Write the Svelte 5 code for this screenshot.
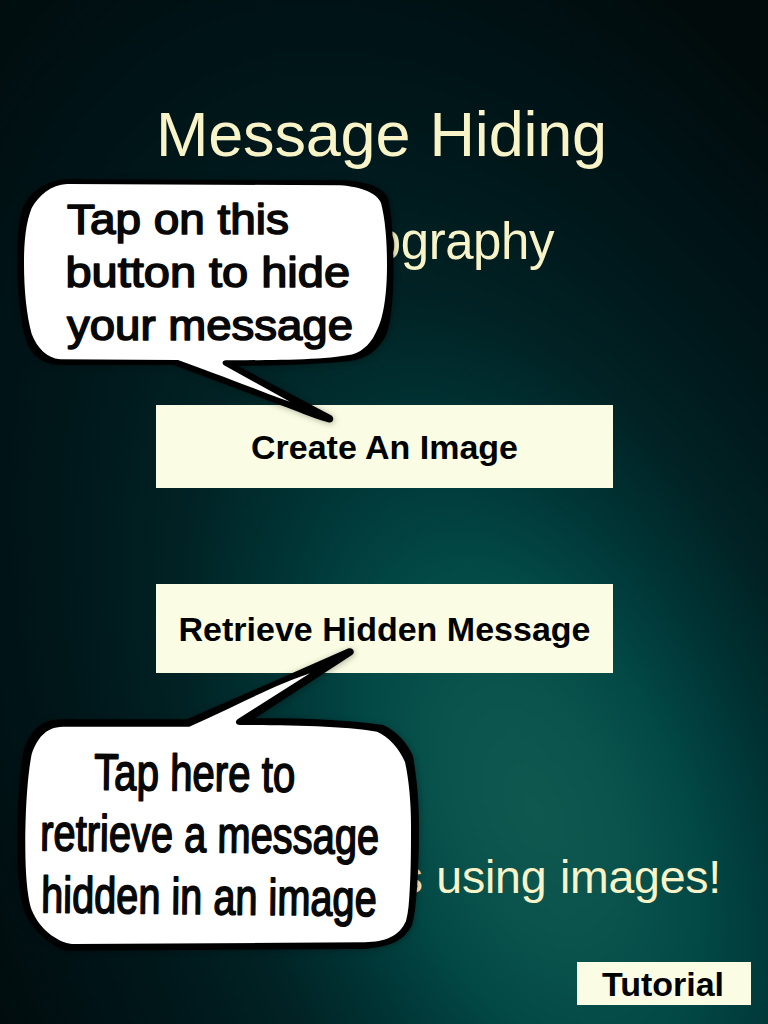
<script>
  const createLines = [
    { text: 'Tap on this', x: 67, y: 233.5, width: 222 },
    { text: 'button to hide', x: 65.5, y: 286.9, width: 284.5 },
    { text: 'your message', x: 67, y: 340.3, width: 286 }
  ];
  const retrieveLines = [
    { text: 'Tap here to', x: 94, y: 789.5, width: 201 },
    { text: 'retrieve a message', x: 40, y: 850.2, width: 339 },
    { text: 'hidden in an image', x: 41, y: 912.2, width: 335.5 }
  ];
</script>

<main class="screen">
  <svg class="backdrop" viewBox="0 0 768 1024" aria-hidden="true">
    <defs>
      <radialGradient id="glow" gradientUnits="userSpaceOnUse" cx="0" cy="0" r="1"
        gradientTransform="translate(534 810) rotate(-23) scale(590 1050)">
        <stop offset="0" stop-color="#0e5850" />
        <stop offset="0.12" stop-color="#0b544d" />
        <stop offset="0.25" stop-color="#024845" />
        <stop offset="0.38" stop-color="#003435" />
        <stop offset="0.52" stop-color="#012224" />
        <stop offset="0.66" stop-color="#00191c" />
        <stop offset="0.8" stop-color="#001316" />
        <stop offset="1" stop-color="#010b0c" />
      </radialGradient>
    </defs>
    <rect width="768" height="1024" fill="url(#glow)" />
  </svg>

  <header>
    <h1>Message Hiding</h1>
    <h2>ography</h2>
  </header>
  <button class="action create">Create An Image</button>
  <button class="action retrieve">Retrieve Hidden Message</button>
  <p>s using images!</p>
  <footer><button class="tutorial">Tutorial</button></footer>

  <svg class="callouts" viewBox="0 0 768 1024">
    <g class="bubble">
      <path d="M68 179.3 L345 180.3 C368 182 382 187 388 198 C392 212 393.7 245 393.5 275 C393 300 391 325 386 335 C378 351 366 359 350 361 C315 364.500 275 365.500 238 366 L331.500 415.500 C335 418.500 333 423.500 328 422.300 C312 418 295 410 280 405 L173 364.700 L58 365 C42 363.500 33 356 28 345 C20 325 17.300 290 17.300 262 C17.300 235 19 215 24 205 C32 190 48 180 68 179.300Z" />
      <path class="paper" d="M67 184 L340 185.300 C362 187 377 193 381 203 C385 218 387 240 387 265 C387 292 384 317 377 330 C372 342 364 351 352 354.500 C325 360 270 360.300 226 360.300 C222 360.500 221.500 363.500 224.500 365.500 L290 401.700 C260 391 220 375 178 360 L60 359.300 C47 358 37 348 31.700 334 C26.500 315 24 290 24 263 C24 240 26 222 31.700 208 C39 195 51 185 67 184Z" />
    </g>
    <g class="words first">
      {#each createLines as line}
        <text x={line.x} y={line.y} textLength={line.width} lengthAdjust="spacingAndGlyphs">{line.text}</text>
      {/each}
    </g>

    <g class="bubble">
      <path d="M61 719.300 L187 719.300 L348 648.500 C353 647 356 652 352 655 L255 718.300 C300 718 345 719.500 383 725 C397 731 408 744 413 756 C417 780 419 802 419 827 C419 850 418.500 870 416.700 892 C415.500 905 415 915 412 925 C404 942 387 947 364 949 L68 950.700 C55 949 34 933 25 913 C18.500 896 17.300 865 17.300 845 C17.300 810 19 775 23.300 752 C28 735 37 719.800 61 719.300Z" />
      <path class="paper" d="M63 726.700 L189.300 726.700 C230 709 265 689 310 673.300 L237.500 719.300 C234.500 722 236 725 240 725 C290 725 345 726 377 731.700 C389 737 399 748 405 762 C409 780 411 803 411 827 C411 850 411 870 409.700 890 C409 902 408.500 912 406 921 C399 937 385 941.500 365 942.300 L72 944 C56 942 39 928 31.700 910 C26.500 895 25.300 865 25.300 845 C25.300 810 27.500 775 31.700 754 C37 739 45 727 63 726.700Z" />
    </g>
    <g class="words second">
      {#each retrieveLines as line}
        <text x={line.x} y={line.y} textLength={line.width} lengthAdjust="spacingAndGlyphs"
          transform={`rotate(0.65 ${line.x} ${line.y})`}>{line.text}</text>
      {/each}
    </g>
  </svg>
</main>

<style>
  :global(body) { margin: 0; background: #011214; }
  .screen {
    position: relative;
    isolation: isolate;
    display: flex;
    flex-direction: column;
    width: 768px;
    height: 1024px;
    overflow: hidden;
    font-family: "Liberation Sans", Arial, sans-serif;
    color: #f9f3c8;
  }
  .backdrop, .callouts { position: absolute; inset: 0; width: 768px; height: 1024px; }
  .backdrop { z-index: -1; }
  .callouts { pointer-events: none; }
  header { height: 405px; flex: none; }
  h1, h2, p { margin: 0; font-weight: 400; white-space: nowrap; }
  h1 { padding: 98px 0 0 156px; font-size: 63px; line-height: 72px; letter-spacing: -0.2px; word-spacing: 2px; }
  h2 { padding: 43px 214px 0 0; font-size: 51px; line-height: 58px; letter-spacing: -0.45px; text-align: right; }
  button {
    display: flex;
    align-items: center;
    justify-content: center;
    border: 0;
    border-radius: 0;
    padding: 0;
    background: #fafde3;
    color: #000;
    font: bold 34px/38px "Liberation Sans", Arial, sans-serif;
    white-space: nowrap;
  }
  .action { width: 457px; margin-left: 156px; flex: none; }
  .create { height: 83px; }
  .retrieve { height: 89px; margin-top: 96px; }
  p { padding: 177px 47px 0 0; font-size: 46.5px; line-height: 54px; letter-spacing: -0.25px; word-spacing: 1px; text-align: right; }
  footer { display: flex; justify-content: flex-end; margin-top: auto; padding: 0 17px 19px 0; }
  .tutorial { width: 174px; height: 43px; padding-right: 2px; }
  .bubble { fill: #000; filter: drop-shadow(1px 1px 3px rgb(0 0 0 / 0.3)); }
  .paper { fill: #fff; }
  .words { fill: #080808; stroke: #080808; stroke-linejoin: round; stroke-linecap: round; }
  .first { font-size: 43px; stroke-width: 1.6px; }
  .second { font-size: 51px; stroke-width: 1.7px; }
</style>
